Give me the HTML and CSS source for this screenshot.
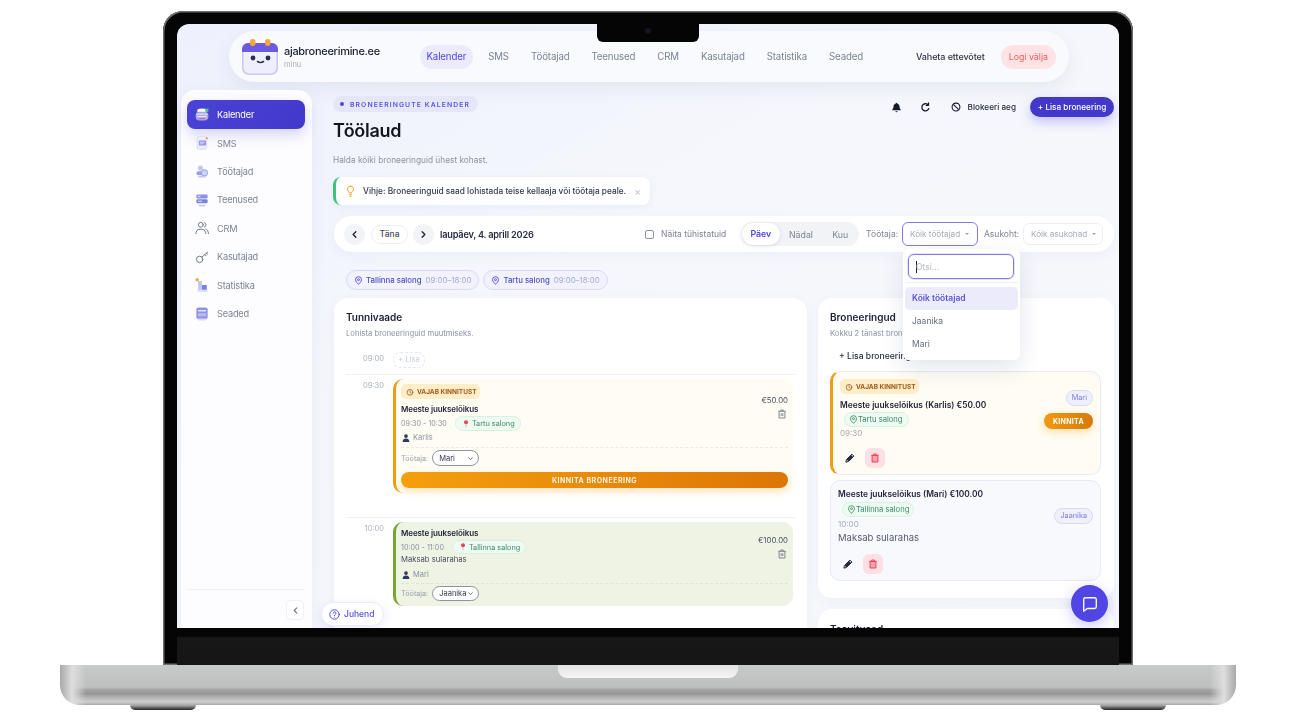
FILE: index.html
```html
<!DOCTYPE html>
<html>

<head>
  <meta charset="utf-8">
  <title>ajabroneerimine.ee</title>
  <link rel="stylesheet" href="styles.css">
</head>

<body>
  <div class="laptop">
    <div class="lid">
      <div class="screen">
        <div class="notch"><span class="camera"></span></div>

        <!-- top bar -->
        <header class="topbar">
          <svg class="logo" viewBox="0 0 36 36">
            <rect x="0" y="4" width="36" height="32" rx="7" fill="#c7c8f5"/>
            <rect x="1.500" y="6" width="33" height="28.500" rx="6" fill="#eeeefd"/>
            <path d="M0 13V10a6 6 0 0 1 6-6h24a6 6 0 0 1 6 6v3z" fill="#6d5ae0"/>
            <rect x="8" y="0" width="5.500" height="7" rx="2.700" fill="#f2a93b"/>
            <rect x="23" y="0" width="5.500" height="7" rx="2.700" fill="#f2a93b"/>
            <circle cx="11" cy="19" r="2.400" fill="#2b2d55"/>
            <circle cx="26" cy="19" r="2.400" fill="#2b2d55"/>
            <path d="M15.500 22.500q3 2 6 0" fill="none" stroke="#2b2d55" stroke-width="1.600" stroke-linecap="round"/>
          </svg>
          <div class="brand">
            <div class="brand-name">ajabroneerimine.ee</div>
            <div class="brand-sub">minu</div>
          </div>
          <nav class="topnav">
            <a class="topnav-item active">Kalender</a>
            <a class="topnav-item">SMS</a>
            <a class="topnav-item">Töötajad</a>
            <a class="topnav-item">Teenused</a>
            <a class="topnav-item">CRM</a>
            <a class="topnav-item">Kasutajad</a>
            <a class="topnav-item">Statistika</a>
            <a class="topnav-item">Seaded</a>
          </nav>
          <a class="switch">Vaheta ettevõtet</a>
          <a class="logout">Logi välja</a>
        </header>

        <div class="app">
          <!-- sidebar -->
          <aside class="sidebar">
            <a class="side-item active">
              <svg class="side-icon" viewBox="0 0 20 20"><ellipse cx="10" cy="5" rx="6" ry="3" fill="#fff"/><rect x="2" y="6" width="16" height="11" rx="5" fill="#a9a6f0"/><path d="M3 9h14M4 12h12" stroke="#fff" stroke-width="1"/><rect x="14" y="2" width="4" height="4" fill="#55c878"/><path d="M6 14.500h8" stroke="#e25a6b" stroke-width="1"/></svg>
              <span>Kalender</span>
            </a>
            <a class="side-item">
              <svg class="side-icon" viewBox="0 0 20 20"><rect x="4" y="2" width="12" height="16" rx="3" fill="#eceefb" stroke="#d5d8f4"/><rect x="6" y="7" width="9" height="6" rx="1" fill="#8f92e6"/><path d="M7 9h7M7 11h5" stroke="#fff" stroke-width=".8"/><circle cx="16" cy="4" r="1.300" fill="#f0825a"/></svg>
              <span>SMS</span>
            </a>
            <a class="side-item">
              <svg class="side-icon" viewBox="0 0 20 20"><circle cx="8" cy="5" r="3.200" fill="#c5c8ee"/><rect x="3" y="9" width="10" height="5" rx="2.500" fill="#9a9de6"/><circle cx="13" cy="11" r="4" fill="#c9d4f7" stroke="#8f92e6"/><path d="M6 16h8" stroke="#c5c8ee" stroke-width="2" stroke-linecap="round"/></svg>
              <span>Töötajad</span>
            </a>
            <a class="side-item">
              <svg class="side-icon" viewBox="0 0 20 20"><rect x="3" y="3" width="14" height="5" rx="1.500" fill="#8f92e6"/><rect x="3" y="9" width="14" height="5" rx="1.500" fill="#7d80de"/><path d="M5 16h10l-2 2H7z" fill="#c5c8ee"/><path d="M5 5.500h3M5 11.500h5" stroke="#fff"/></svg>
              <span>Teenused</span>
            </a>
            <a class="side-item">
              <svg class="side-icon" viewBox="0 0 20 20" fill="none" stroke="#6b7488" stroke-width="1.200" stroke-linecap="round"><circle cx="8.500" cy="6" r="3"/><path d="M2.500 17v-1.500a5 5 0 0 1 5-4h2a5 5 0 0 1 5 4V17"/><path d="M13 3.200a3 3 0 0 1 0 5.600M15 11.500a5 5 0 0 1 3 4.500V17"/></svg>
              <span>CRM</span>
            </a>
            <a class="side-item">
              <svg class="side-icon" viewBox="0 0 20 20" fill="none" stroke="#6b7488" stroke-width="1.200" stroke-linecap="round"><circle cx="7" cy="13" r="4"/><path d="M10 10l7-6M13.500 7l1.500 1.500M15.500 5l1.500 1.500"/></svg>
              <span>Kasutajad</span>
            </a>
            <a class="side-item">
              <svg class="side-icon" viewBox="0 0 20 20"><circle cx="4" cy="3.500" r="2.200" fill="#f2a93b"/><rect x="5" y="5" width="5" height="13" fill="#c5c8ee"/><rect x="10" y="10" width="6" height="8" fill="#7d80de"/><rect x="4" y="16" width="13" height="2.500" rx="1" fill="#dfe1f8"/></svg>
              <span>Statistika</span>
            </a>
            <a class="side-item">
              <svg class="side-icon" viewBox="0 0 20 20"><rect x="3" y="2" width="14" height="14" rx="2" fill="#8f92e6"/><path d="M5 6h10" stroke="#fff" stroke-width="1.400"/><rect x="5" y="9" width="10" height="4" fill="#b9bbf0"/><rect x="5" y="16" width="10" height="2" rx="1" fill="#d5d8f4"/></svg>
              <span>Seaded</span>
            </a>
            <div class="side-foot">
              <button class="collapse">
                <svg viewBox="0 0 10 10" width="9" height="9" fill="none" stroke="#6b7488" stroke-width="1.200" stroke-linecap="round" stroke-linejoin="round"><path d="M6.500 2L3.500 5l3 3"/></svg>
              </button>
            </div>
          </aside>

          <!-- main -->
          <main class="main">
            <div class="page-head">
              <div>
                <div class="tag"><i class="tag-dot"></i>BRONEERINGUTE KALENDER</div>
                <h1 class="page-title">Töölaud</h1>
                <p class="page-sub">Halda kõiki broneeringuid ühest kohast.</p>
              </div>
              <div class="head-actions">
                <svg class="act-bell" viewBox="0 0 12 12" width="11" height="11"><path d="M6 .800a1 1 0 0 1 1 1c1.600.4 2.300 1.700 2.300 3.200 0 1.700.5 2.500 1.400 3.500v.5H1.300v-.5C2.200 7.500 2.700 6.700 2.700 5c0-1.500.7-2.800 2.300-3.200a1 1 0 0 1 1-1zM4.800 10h2.400a1.200 1.200 0 0 1-2.400 0z" fill="#16192c"/></svg>
                <svg class="act-refresh" viewBox="0 0 12 12" width="11" height="11" fill="none" stroke="#16192c" stroke-width="1.400" stroke-linecap="round"><path d="M9.600 7.200A3.900 3.900 0 1 1 8.700 3"/><path d="M9.300 1v2.600H6.800" stroke-linejoin="round"/></svg>
                <svg class="act-block" viewBox="0 0 12 12" width="10" height="10" fill="none" stroke="#16192c" stroke-width="1.300"><circle cx="6" cy="6" r="4.700"/><path d="M2.800 2.800l6.400 6.400"/></svg>
                <span class="act-text">Blokeeri aeg</span>
                <button class="add-btn">+ Lisa broneering</button>
              </div>
            </div>

            <div class="hint">
              <svg viewBox="0 0 12 16" width="9" height="12" fill="none" stroke="#f2a01e" stroke-width="1.300" stroke-linecap="round"><path d="M6 1.500a4 4 0 0 0-2.300 7.300c.5.400.8.900.8 1.700h3c0-.8.300-1.300.8-1.700A4 4 0 0 0 6 1.500zM4.800 13h2.400M5.300 15h1.400"/></svg>
              <span>Vihje: Broneeringuid saad lohistada teise kellaaja või töötaja peale.</span>
              <i class="hint-x">×</i>
            </div>

            <div class="toolbar">
              <button class="round-btn"><svg viewBox="0 0 10 10" width="9" height="9" fill="none" stroke="#20243a" stroke-width="1.500" stroke-linecap="round" stroke-linejoin="round"><path d="M6.500 2L3.500 5l3 3"/></svg></button>
              <button class="today">Täna</button>
              <button class="round-btn"><svg viewBox="0 0 10 10" width="9" height="9" fill="none" stroke="#20243a" stroke-width="1.500" stroke-linecap="round" stroke-linejoin="round"><path d="M3.500 2l3 3-3 3"/></svg></button>
              <span class="date">laupäev, 4. aprill 2026</span>
              <span class="check"></span>
              <span class="check-label">Näita tühistatuid</span>
              <div class="segment">
                <span class="seg-item active">Päev</span>
                <span class="seg-item">Nädal</span>
                <span class="seg-item">Kuu</span>
              </div>
              <span class="filter-label">Töötaja:</span>
              <div class="filter">
                <div class="filter-select open">Kõik töötajad<i class="caret"></i></div>
                <div class="dropdown">
                  <div class="dd-search"><div class="dd-input"><i class="dd-cursor"></i>Otsi...</div></div>
                  <div class="dd-option active">Kõik töötajad</div>
                  <div class="dd-option">Jaanika</div>
                  <div class="dd-option">Mari</div>
                </div>
              </div>
              <span class="filter-label second">Asukoht:</span>
              <div class="filter-select">Kõik asukohad<i class="caret"></i></div>
            </div>

            <div class="loc-chips">
              <span class="loc-chip">
                <svg viewBox="0 0 12 12" width="9" height="9" fill="none" stroke="#4f46e5" stroke-width="1.200"><path d="M6 11S2 7.800 2 4.900a4 4 0 0 1 8 0C10 7.800 6 11 6 11z"/><circle cx="6" cy="4.900" r="1.300"/></svg>
                <b>Tallinna salong</b><span>09:00–18:00</span>
              </span>
              <span class="loc-chip">
                <svg viewBox="0 0 12 12" width="9" height="9" fill="none" stroke="#4f46e5" stroke-width="1.200"><path d="M6 11S2 7.800 2 4.900a4 4 0 0 1 8 0C10 7.800 6 11 6 11z"/><circle cx="6" cy="4.900" r="1.300"/></svg>
                <b>Tartu salong</b><span>09:00–18:00</span>
              </span>
            </div>

            <div class="columns">
              <section class="panel timeline">
                <h2 class="panel-title">Tunnivaade</h2>
                <p class="panel-sub">Lohista broneeringuid muutmiseks.</p>

                <div class="slot first">
                  <span class="slot-time mid">09:00</span>
                  <span class="slot-add">+ Lisa</span>
                </div>

                <div class="slot tall">
                  <span class="slot-time">09:30</span>
                  <div class="booking pending">
                    <div class="booking-top">
                      <div>
                        <span class="need-pill">
                          <svg viewBox="0 0 12 12" width="8" height="8" fill="none" stroke="#a4571a" stroke-width="1.200" stroke-linecap="round"><circle cx="6" cy="6.500" r="4.300"/><path d="M6 4.200v2.400l1.500 1"/></svg>
                          VAJAB KINNITUST
                        </span>
                        <div class="booking-name">Meeste juukselõikus</div>
                        <div class="booking-row">
                          <span class="booking-time">09:30 - 10:30</span>
                          <span class="salon-pin">
                            <svg viewBox="0 0 8 12" width="6" height="8"><circle cx="4" cy="3.500" r="3" fill="#ef4158"/><path d="M3.500 6h1v5h-1z" fill="#c9a0a6"/></svg>
                            Tartu salong
                          </span>
                        </div>
                      </div>
                      <div class="booking-side">
                        <span class="price">€50.00</span>
                        <svg class="bin" viewBox="0 0 12 12" width="10" height="10" fill="none" stroke="#6b7280" stroke-width="1"><path d="M1.500 2.800h9M4.500 2.500V1.200h3v1.300M2.500 3v7.800h7V3M5 5v3.500M7 5v3.500"/></svg>
                      </div>
                    </div>
                    <div class="client"><svg viewBox="0 0 10 10" width="8" height="8"><circle cx="5" cy="2.600" r="2.300" fill="#2b3a5e"/><path d="M.8 10c0-3 1.700-4.300 4.200-4.300S9.200 7 9.200 10z" fill="#2b3a5e"/></svg>Karlis</div>
                    <div class="staff-row">
                      <span>Töötaja:</span>
                      <span class="staff-select wide">Mari<svg viewBox="0 0 10 10" width="7" height="7" fill="none" stroke="#555" stroke-width="1.200"><path d="M2 3.500L5 6.500l3-3"/></svg></span>
                    </div>
                    <button class="confirm-wide">KINNITA BRONEERING</button>
                  </div>
                </div>

                <div class="slot">
                  <span class="slot-time">10:00</span>
                  <div class="booking paid">
                    <div class="booking-top">
                      <div>
                        <div class="booking-name flush">Meeste juukselõikus</div>
                        <div class="booking-row">
                          <span class="booking-time">10:00 - 11:00</span>
                          <span class="salon-pin">
                            <svg viewBox="0 0 8 12" width="6" height="8"><circle cx="4" cy="3.500" r="3" fill="#ef4158"/><path d="M3.500 6h1v5h-1z" fill="#c9a0a6"/></svg>
                            Tallinna salong
                          </span>
                        </div>
                        <div class="booking-note">Maksab sularahas</div>
                      </div>
                      <div class="booking-side low">
                        <span class="price">€100.00</span>
                        <svg class="bin" viewBox="0 0 12 12" width="10" height="10" fill="none" stroke="#6b7280" stroke-width="1"><path d="M1.500 2.800h9M4.500 2.500V1.200h3v1.300M2.500 3v7.800h7V3M5 5v3.500M7 5v3.500"/></svg>
                      </div>
                    </div>
                    <div class="client"><svg viewBox="0 0 10 10" width="8" height="8"><circle cx="5" cy="2.600" r="2.300" fill="#2b3a5e"/><path d="M.8 10c0-3 1.700-4.300 4.200-4.300S9.200 7 9.200 10z" fill="#2b3a5e"/></svg>Mari</div>
                    <div class="staff-row">
                      <span>Töötaja:</span>
                      <span class="staff-select">Jaanika<svg viewBox="0 0 10 10" width="7" height="7" fill="none" stroke="#555" stroke-width="1.200"><path d="M2 3.500L5 6.500l3-3"/></svg></span>
                    </div>
                  </div>
                </div>
              </section>

              <div class="right-col">
                <section class="panel bookings">
                  <h2 class="panel-title">Broneeringud</h2>
                  <p class="panel-sub">Kokku 2 tänast broneeringut</p>
                  <a class="list-add">+ Lisa broneering</a>

                  <div class="item pending">
                    <div class="item-main">
                      <span class="need-pill">
                        <svg viewBox="0 0 12 12" width="8" height="8" fill="none" stroke="#a4571a" stroke-width="1.200" stroke-linecap="round"><circle cx="6" cy="6.500" r="4.300"/><path d="M6 4.200v2.400l1.500 1"/></svg>
                        VAJAB KINNITUST
                      </span>
                      <div class="item-name">Meeste juukselõikus (Karlis) €50.00</div>
                      <span class="item-salon">
                        <svg viewBox="0 0 12 12" width="9" height="9" fill="none" stroke="#2e8b57" stroke-width="1.100"><path d="M6 11S2 7.800 2 4.900a4 4 0 0 1 8 0C10 7.800 6 11 6 11z"/><circle cx="6" cy="4.900" r="1.300"/></svg>Tartu salong
                      </span>
                      <div class="item-time">09:30</div>
                      <div class="item-actions">
                        <span class="icon-btn"><svg viewBox="0 0 12 12" width="10" height="10"><path d="M8.300 1.300l2.400 2.400-6.600 6.600-3 .6.600-3z" fill="none" stroke="#20243a" stroke-width="1.200" stroke-linejoin="round"/><path d="M2 8l2 2 5.500-5.500-2-2z" fill="#20243a"/></svg></span>
                        <span class="icon-btn danger"><svg viewBox="0 0 12 12" width="10" height="10" fill="none" stroke="#ef4158" stroke-width="1.200"><path d="M1.500 2.800h9M4.500 2.500V1.200h3v1.300"/><path d="M2.500 3v7.800h7V3z" fill="#f9a3af"/></svg></span>
                      </div>
                    </div>
                    <div class="item-side">
                      <span class="staff-pill">Mari</span>
                      <button class="confirm">KINNITA</button>
                    </div>
                  </div>

                  <div class="item plain">
                    <div class="item-main">
                      <div class="item-name flush">Meeste juukselõikus (Mari) €100.00</div>
                      <span class="item-salon">
                        <svg viewBox="0 0 12 12" width="9" height="9" fill="none" stroke="#2e8b57" stroke-width="1.100"><path d="M6 11S2 7.800 2 4.900a4 4 0 0 1 8 0C10 7.800 6 11 6 11z"/><circle cx="6" cy="4.900" r="1.300"/></svg>Tallinna salong
                      </span>
                      <div class="item-time">10:00</div>
                      <div class="item-note">Maksab sularahas</div>
                      <div class="item-actions">
                        <span class="icon-btn"><svg viewBox="0 0 12 12" width="10" height="10"><path d="M8.300 1.300l2.400 2.400-6.600 6.600-3 .6.600-3z" fill="none" stroke="#20243a" stroke-width="1.200" stroke-linejoin="round"/><path d="M2 8l2 2 5.500-5.500-2-2z" fill="#20243a"/></svg></span>
                        <span class="icon-btn danger"><svg viewBox="0 0 12 12" width="10" height="10" fill="none" stroke="#ef4158" stroke-width="1.200"><path d="M1.500 2.800h9M4.500 2.500V1.200h3v1.300"/><path d="M2.500 3v7.800h7V3z" fill="#f9a3af"/></svg></span>
                      </div>
                    </div>
                    <div class="item-side">
                      <span class="staff-pill">Jaanika</span>
                    </div>
                  </div>
                </section>

                <section class="panel notices">
                  <h2 class="panel-title">Teavitused</h2>
                </section>
              </div>
            </div>
          </main>
        </div>

        <a class="guide">
          <svg viewBox="0 0 14 14" width="11" height="11" fill="none" stroke="#4f46e5" stroke-width="1.200" stroke-linecap="round"><circle cx="7" cy="7" r="6"/><path d="M5.300 5.400a1.800 1.800 0 1 1 2.500 1.700c-.6.300-.8.700-.8 1.300M7 10.300v.1"/></svg>
          Juhend
        </a>
        <button class="chat">
          <svg viewBox="0 0 20 20" width="18" height="18" fill="none" stroke="#fff" stroke-width="1.500" stroke-linejoin="round"><path d="M3 5a2 2 0 0 1 2-2h10a2 2 0 0 1 2 2v8a2 2 0 0 1-2 2H7l-4 3z"/></svg>
        </button>
      </div>
      <div class="chin"></div>
    </div>
    <div class="base"><span class="thumb"></span></div>
    <div class="feet"><span class="foot"></span><span class="foot"></span></div>
  </div>
</body>

</html>
```
FILE: styles.css
```css
:root {
  --indigo: #4f46e5;
  --indigo-dark: #4338ca;
  --ink: #1b1f33;
  --muted: #7b8494;
  --soft: #a4abb8;
  --line: #eef0f6;
}

* {
  box-sizing: border-box;
}

html,
body {
  margin: 0;
  height: 720px;
  overflow: hidden;
  background: #fff;
}

body {
  font-family: "Inter", "Liberation Sans", sans-serif;
  color: var(--ink);
}

button {
  font-family: inherit;
  border: 0;
  padding: 0;
}

/* laptop */
.laptop {
  width: 1176px;
  margin: 11px 0 0 60px;
}

.lid {
  width: 970px;
  height: 654px;
  margin-left: 103px;
  padding: 13px 14px 0;
  background: #050505;
  border-radius: 20px 20px 0 0;
  box-shadow: inset 0 0 0 1.500px #6f6f6f;
}

.screen {
  position: relative;
  height: 604px;
  overflow: hidden;
  border-radius: 12px 12px 0 0;
  background: linear-gradient(150deg, #eef1fd 0%, #f5f7fc 40%, #f7f8fc 100%);
  filter: blur(.5px);
}

.notch {
  position: absolute;
  top: 0;
  left: 420px;
  z-index: 5;
  width: 102px;
  height: 18px;
  background: #050505;
  border-radius: 0 0 6px 6px;
}

.camera {
  position: absolute;
  top: 4px;
  left: 48px;
  width: 6px;
  height: 6px;
  border-radius: 50%;
  background: #14161d;
}

.chin {
  height: 37px;
  background: linear-gradient(#050505 0, #050505 8px, #181818 10px, #151515 100%);
}

.base {
  display: flex;
  justify-content: center;
  height: 40px;
  border-radius: 0 0 20px 20px;
  background:
    linear-gradient(90deg, #a8a8a8 0, #dedede 12px, rgba(222, 222, 222, 0) 26px, rgba(222, 222, 222, 0) calc(100% - 26px), #dedede calc(100% - 12px), #a8a8a8 100%),
    linear-gradient(#c9caca 0, #bebfbf 55%, #a2a2a2 63%, #969696 72%, #b5b5b5 82%, #cfcfcf 92%, #a8a8a8 100%);
}

.thumb {
  width: 180px;
  height: 13px;
  background: linear-gradient(#e2e2e2, #f6f6f6);
  border-radius: 0 0 9px 9px;
}

.feet {
  display: flex;
  justify-content: space-between;
  padding: 0 70px;
}

.foot {
  width: 66px;
  height: 5px;
  background: linear-gradient(#b0b0b0, #222);
  border-radius: 0 0 8px 8px;
}

/* top bar */
.topbar {
  display: flex;
  align-items: center;
  width: 840px;
  height: 51px;
  margin: 7px 0 0 52px;
  padding: 0 13px;
  background: #f9fafd;
  border-radius: 26px;
  box-shadow: 0 6px 18px rgba(90, 100, 150, .10);
}

.logo {
  width: 36px;
  height: 36px;
  flex: none;
}

.brand {
  flex: none;
  width: 136px;
  margin-left: 6px;
}

.brand-name {
  font-size: 11px;
  font-weight: 500;
  line-height: 14px;
  letter-spacing: -.3px;
}

.brand-sub {
  margin-top: 2px;
  font-size: 7.500px;
  line-height: 10px;
  color: var(--soft);
}

.topnav {
  display: flex;
  align-items: center;
  gap: 9px;
}

.topnav-item {
  padding: 0 6.500px;
  font-size: 9.700px;
  line-height: 24px;
  letter-spacing: -.15px;
  color: var(--muted);
}

.topnav-item.active {
  color: var(--indigo);
  background: #ecebfb;
  border-radius: 12px;
}

.switch {
  margin-left: auto;
  font-size: 9px;
  font-weight: 500;
  letter-spacing: -.1px;
  color: #30354a;
  white-space: nowrap;
}

.logout {
  margin-left: 16px;
  padding: 0 8px;
  font-size: 8.800px;
  line-height: 24px;
  color: #ef5a5f;
  background: #fde3e4;
  border-radius: 12px;
  white-space: nowrap;
}

/* layout under top bar */
.app {
  display: flex;
  height: 546px;
  margin: 8px 5px 0 4px;
}

.sidebar {
  display: flex;
  flex-direction: column;
  flex: none;
  width: 131px;
  height: 560px;
  padding: 10px 7px 0 6px;
  background: #fdfdff;
  border-radius: 14px 14px 0 0;
  box-shadow: 0 4px 16px rgba(90, 100, 150, .08);
}

.side-item {
  display: flex;
  align-items: center;
  gap: 7px;
  flex: none;
  height: 28.400px;
  padding-left: 7px;
  font-size: 9.200px;
  letter-spacing: -.2px;
  color: var(--muted);
}

.side-item.active {
  height: 29px;
  color: #fff;
  background: linear-gradient(120deg, #4a42d6, #4338ca);
  border-radius: 8px;
  box-shadow: 0 6px 14px rgba(79, 70, 229, .22);
}

.side-icon {
  width: 16px;
  height: 16px;
  flex: none;
}

.side-foot {
  margin-top: 261px;
  padding: 9px 1px 0 0;
  border-top: 1px solid var(--line);
  text-align: right;
}

.collapse {
  width: 18px;
  height: 20px;
  background: #fff;
  border: 1px solid #eef0f6;
  border-radius: 5px;
}

.main {
  flex: 1;
  min-width: 0;
  margin-left: 21px;
  padding-top: 6px;
}

.page-head {
  display: flex;
  justify-content: space-between;
  align-items: flex-start;
}

.tag {
  display: flex;
  align-items: center;
  gap: 6px;
  width: 145px;
  height: 16px;
  padding-left: 7px;
  font-size: 6.800px;
  font-weight: 600;
  letter-spacing: 1.100px;
  color: #5c55dc;
  background: #e5e6f8;
  border-radius: 8px;
  white-space: nowrap;
}

.tag-dot {
  flex: none;
  width: 4px;
  height: 4px;
  background: var(--indigo);
  border-radius: 50%;
}

.page-title {
  margin: 7px 0 0;
  font-size: 18px;
  font-weight: 600;
  line-height: 24px;
  letter-spacing: -.3px;
  color: #14161f;
}

.page-sub {
  margin: 11px 0 0;
  font-size: 8.300px;
  line-height: 12px;
  color: #8b93a1;
}

.head-actions {
  display: flex;
  align-items: center;
  height: 20px;
  margin-top: 1px;
}

.act-refresh {
  margin-left: 18px;
}

.act-block {
  margin-left: 20px;
}

.act-text {
  margin-left: 7px;
  font-size: 8.200px;
  font-weight: 500;
  color: #2a2e42;
}

.add-btn {
  width: 84px;
  height: 20px;
  margin-left: 14px;
  font-size: 8.200px;
  font-weight: 500;
  color: #fff;
  background: var(--indigo-dark);
  border-radius: 10px;
  box-shadow: 0 5px 12px rgba(79, 70, 229, .3);
}

.hint {
  display: flex;
  align-items: center;
  gap: 8px;
  width: 317px;
  height: 28px;
  margin-top: 11px;
  padding-left: 10px;
  font-size: 8.300px;
  font-weight: 500;
  color: #33384c;
  white-space: nowrap;
  background: #fff;
  border-left: 3px solid #3fc27a;
  border-radius: 8px;
  box-shadow: 0 2px 8px rgba(90, 100, 150, .07);
}

.hint svg {
  flex: none;
}

.hint-x {
  margin-left: auto;
  margin-right: 9px;
  font-size: 10px;
  font-style: normal;
  color: #c3c8d2;
}

.toolbar {
  display: flex;
  align-items: center;
  height: 36px;
  margin: 11px 0 0 1px;
  padding: 0 11px 0 10px;
  background: #fff;
  border-radius: 18px;
  box-shadow: 0 4px 12px rgba(90, 100, 150, .05);
}

.round-btn {
  display: flex;
  align-items: center;
  justify-content: center;
  flex: none;
  width: 21px;
  height: 21px;
  background: #f2f3f7;
  border-radius: 50%;
}

.today {
  width: 37px;
  height: 19px;
  margin: 0 5px 0 6px;
  font-size: 8.500px;
  font-weight: 500;
  color: #444a5e;
  background: #fff;
  border: 1px solid #eceef4;
  border-radius: 10px;
}

.date {
  flex: none;
  width: 205px;
  margin-left: 6px;
  font-size: 9.200px;
  font-weight: 600;
  letter-spacing: -.2px;
  color: #2a2e42;
  white-space: nowrap;
}

.check {
  flex: none;
  width: 9px;
  height: 9px;
  background: #fff;
  border: 1px solid #8b92a2;
  border-radius: 2px;
}

.check-label {
  flex: none;
  width: 80px;
  margin-left: 7px;
  font-size: 8.500px;
  color: var(--muted);
  white-space: nowrap;
}

.segment {
  display: flex;
  align-items: center;
  flex: none;
  width: 118px;
  height: 24px;
  padding: 0 1px;
  background: #f2f3f7;
  border-radius: 12px;
}

.seg-item {
  width: 43px;
  font-size: 8.800px;
  text-align: center;
  color: var(--muted);
}

.seg-item:nth-child(3) {
  width: 36px;
}

.seg-item.active {
  width: 38px;
  line-height: 22px;
  font-weight: 600;
  color: var(--indigo);
  background: #fff;
  border-radius: 11px;
  box-shadow: 0 1px 4px rgba(90, 100, 150, .18);
}

.filter-label {
  flex: none;
  width: 36px;
  margin-left: 7px;
  font-size: 8.500px;
  color: var(--muted);
  white-space: nowrap;
}

.filter-label.second {
  width: 39px;
  margin-left: 6px;
}

.filter {
  position: relative;
  flex: none;
  z-index: 6;
}

.filter-select {
  display: flex;
  align-items: center;
  flex: none;
  width: 80px;
  height: 22px;
  padding-left: 7px;
  font-size: 8.200px;
  color: var(--soft);
  white-space: nowrap;
  background: #fff;
  border: 1px solid #eceef4;
  border-radius: 6px;
}

.filter-select.open {
  width: 76px;
  height: 24px;
  border: 1.500px solid #827bf0;
}

.caret {
  margin-left: 5px;
  border: 2px solid transparent;
  border-top: 2.500px solid #9aa1af;
  border-bottom: 0;
}

.dropdown {
  position: absolute;
  top: 27px;
  left: 1px;
  width: 117px;
  height: 111px;
  padding: 5px 2px 0;
  background: #fff;
  border-radius: 6px;
  box-shadow: 0 8px 22px rgba(60, 70, 110, .14);
}

.dd-search {
  height: 29px;
  padding: 0 3px;
  border-bottom: 1px solid var(--line);
}

.dd-input {
  display: flex;
  align-items: center;
  width: 106px;
  height: 25px;
  padding-left: 7px;
  font-size: 8.500px;
  color: #b5bbc6;
  border: 1.500px solid #827bf0;
  border-radius: 6px;
  box-shadow: 0 0 0 1px #e5e3fb;
}

.dd-cursor {
  width: 1px;
  height: 12px;
  margin-right: -1px;
  background: #20243a;
}

.dd-option {
  height: 23px;
  padding-left: 7px;
  font-size: 8.500px;
  line-height: 23px;
  color: #656c7c;
}

.dd-option.active {
  margin-top: 4px;
  font-weight: 600;
  color: #5c55dc;
  background: #ecebfb;
  border-radius: 5px;
}

.loc-chips {
  display: flex;
  gap: 4px;
  margin: 18px 0 0 13px;
}

.loc-chip {
  display: flex;
  align-items: center;
  gap: 3px;
  height: 20px;
  padding: 0 7px;
  font-size: 7.800px;
  background: #f1f2fc;
  border: 1px solid #d8d9f7;
  border-radius: 10px;
  white-space: nowrap;
}

.loc-chip b {
  font-weight: 500;
  color: #4c4fc4;
}

.loc-chip span {
  margin-left: 1px;
  color: #a3a8d8;
}

.columns {
  display: flex;
  gap: 11px;
  margin: 8px 0 0 1px;
  align-items: flex-start;
}

.panel {
  background: #fff;
  border-radius: 14px;
  box-shadow: 0 4px 14px rgba(90, 100, 150, .05);
}

.panel-title {
  margin: 0;
  font-size: 10px;
  font-weight: 600;
  line-height: 14px;
  color: #1b1f33;
}

.panel-sub {
  margin: 5px 0 0;
  font-size: 7.700px;
  line-height: 10px;
  color: #8b93a1;
  white-space: nowrap;
}

.timeline {
  flex: none;
  width: 473px;
  height: 340px;
  padding: 12px 12px 0;
}

.slot {
  display: flex;
  padding: 4px 2px 0 0;
}

.slot.first {
  margin-top: 6px;
  padding: 7px 2px 6px 0;
  border-bottom: 1px solid var(--line);
}

.slot.tall {
  padding-bottom: 24px;
  border-bottom: 1px solid var(--line);
}

.slot-time {
  flex: none;
  width: 38px;
  margin-right: 9px;
  padding-top: 2px;
  font-size: 7.500px;
  line-height: 10px;
  text-align: right;
  color: #a9afbb;
}

.slot-add {
  width: 32px;
  height: 16px;
  font-size: 7.500px;
  line-height: 14px;
  text-align: center;
  color: #c6cce0;
  border: 1px dashed #e6e8f2;
  border-radius: 7px;
}

.booking {
  flex: 1;
  padding: 5px;
  border-radius: 10px;
}

.booking.pending {
  height: 114px;
  background: #fffcf3;
  border-left: 3px solid #f09c12;
}

.booking.paid {
  height: 84px;
  background: #eef3e4;
  border-left: 3px solid #77a52e;
}

.booking-top {
  display: flex;
  justify-content: space-between;
}

.need-pill {
  display: flex;
  align-items: center;
  gap: 3px;
  width: 79px;
  height: 15px;
  padding-left: 5px;
  font-size: 6.500px;
  font-weight: 700;
  color: #a4571a;
  background: #fdeec8;
  border-radius: 5px;
  white-space: nowrap;
}

.booking-name {
  margin-top: 4px;
  font-size: 8px;
  font-weight: 600;
  line-height: 12px;
  letter-spacing: -.1px;
  color: #23273c;
}

.booking-name.flush {
  margin-top: 0;
}

.booking-row {
  display: flex;
  align-items: center;
  gap: 8px;
  margin-top: 1px;
}

.booking-time {
  font-size: 7.200px;
  color: #8b93a1;
}

.salon-pin {
  display: flex;
  align-items: center;
  gap: 3px;
  height: 15px;
  padding: 0 5px 0 7px;
  font-size: 7.300px;
  color: #3c8a66;
  background: #edfbf2;
  border: 1px solid #d6f3e0;
  border-radius: 8px;
  white-space: nowrap;
}

.paid .salon-pin {
  height: 14px;
}

.booking-note {
  margin-top: 1px;
  font-size: 7.700px;
  line-height: 10px;
  color: #4a5064;
}

.booking-side {
  display: flex;
  flex-direction: column;
  align-items: flex-end;
  margin-top: 10px;
}

.booking-side.low {
  margin-top: 7px;
}

.price {
  font-size: 7.800px;
  line-height: 12px;
  color: #4a5064;
}

.bin {
  margin: 3px 1px 0 0;
}

.client {
  display: flex;
  align-items: center;
  gap: 3px;
  margin-top: 2px;
  padding-left: 1px;
  font-size: 7.500px;
  line-height: 10px;
  color: #8b93a1;
}

.paid .client {
  margin-top: 5px;
}

.staff-row {
  display: flex;
  align-items: center;
  gap: 4px;
  margin-top: 4px;
  padding-top: 2px;
  font-size: 7.200px;
  color: #9aa1af;
  border-top: 1px dashed #e9e9e6;
}

.paid .staff-row {
  margin-top: 3px;
  border-color: #dfe4d6;
}

.staff-select {
  display: flex;
  align-items: center;
  justify-content: space-between;
  width: 47px;
  height: 16px;
  padding: 0 4px 0 6px;
  font-size: 7.500px;
  color: #333a50;
  background: #fff;
  border: 1px solid #8c93a6;
  border-radius: 8px;
}

.paid .staff-select {
  height: 15px;
}

.confirm-wide {
  display: block;
  width: 100%;
  height: 16px;
  margin-top: 6px;
  font-size: 7px;
  font-weight: 700;
  letter-spacing: .5px;
  color: #fdf3e2;
  background: linear-gradient(90deg, #f59f0e, #dc7607);
  border-radius: 8px;
  box-shadow: 0 4px 8px rgba(240, 156, 18, .22);
}

.right-col {
  flex: none;
  width: 296px;
}

.bookings {
  padding: 12px 13px 17px 12px;
}

.list-add {
  display: block;
  margin: 11px 0 0 9px;
  font-size: 8.600px;
  font-weight: 500;
  line-height: 12px;
  color: #2a2e42;
}

.item {
  display: flex;
  justify-content: space-between;
  border: 1px solid #e8ebf5;
  border-radius: 10px;
}

.item.pending {
  height: 104px;
  margin-top: 9px;
  padding: 7px 7px 0;
  background: #fffcf3;
  border-left: 3px solid #f09c12;
}

.item.plain {
  height: 101px;
  margin-top: 5px;
  padding: 7px 7px 0;
  background: #f8f9fc;
}

.item-name {
  margin-top: 5px;
  font-size: 8.400px;
  font-weight: 600;
  line-height: 12px;
  color: #23273c;
  white-space: nowrap;
}

.item-name.flush {
  margin-top: 0;
}

.item-salon {
  display: flex;
  align-items: center;
  width: fit-content;
  height: 15px;
  margin: 1px 0 0 4px;
  padding: 0 5px 0 4px;
  font-size: 7.600px;
  color: #3c8a66;
  background: #edfbf2;
  border: 1px solid #d6f3e0;
  border-radius: 8px;
  white-space: nowrap;
}

.plain .item-salon {
  margin-top: 2px;
  padding-right: 4px;
}

.item-time {
  margin-top: 1px;
  font-size: 8px;
  line-height: 10px;
  color: #a4abb8;
}

.plain .item-time {
  margin-top: 2px;
}

.item-note {
  margin-top: 2px;
  font-size: 9.500px;
  line-height: 14px;
  color: #565c70;
}

.item-actions {
  display: flex;
  align-items: center;
  gap: 5px;
  margin-top: 10px;
}

.plain .item-actions {
  margin-top: 9px;
}

.icon-btn {
  display: flex;
  align-items: center;
  justify-content: center;
  width: 20px;
  height: 20px;
  border-radius: 6px;
}

.icon-btn.danger {
  background: #fde0e3;
}

.item-side {
  display: flex;
  flex-direction: column;
  align-items: flex-end;
  gap: 7px;
  margin-top: 11px;
}

.plain .item-side {
  margin-top: 20px;
}

.staff-pill {
  padding: 0 5px;
  font-size: 7.300px;
  line-height: 14px;
  color: #7f7ae0;
  background: #eff0fc;
  border: 1px solid #d9dbf6;
  border-radius: 8px;
}

.confirm {
  width: 49px;
  height: 16px;
  font-size: 7px;
  font-weight: 700;
  letter-spacing: .3px;
  color: #fff;
  background: linear-gradient(90deg, #f09a0e, #d9780a);
  border-radius: 8px;
  box-shadow: 0 3px 8px rgba(240, 156, 18, .3);
}

.notices {
  height: 60px;
  margin-top: 11px;
  padding: 13px 12px;
}

.guide {
  position: absolute;
  left: 144px;
  bottom: 2px;
  display: flex;
  align-items: center;
  gap: 4px;
  width: 63px;
  height: 24px;
  padding-left: 7px;
  font-size: 8.500px;
  font-weight: 500;
  color: #5750de;
  background: #fff;
  border: 1px solid #eceafb;
  border-radius: 12px;
  box-shadow: 0 2px 8px rgba(79, 70, 229, .12);
}

.chat {
  position: absolute;
  left: 894px;
  top: 561px;
  display: flex;
  align-items: center;
  justify-content: center;
  width: 37px;
  height: 37px;
  background: var(--indigo);
  border-radius: 50%;
  box-shadow: 0 4px 14px rgba(79, 70, 229, .3);
}
```
